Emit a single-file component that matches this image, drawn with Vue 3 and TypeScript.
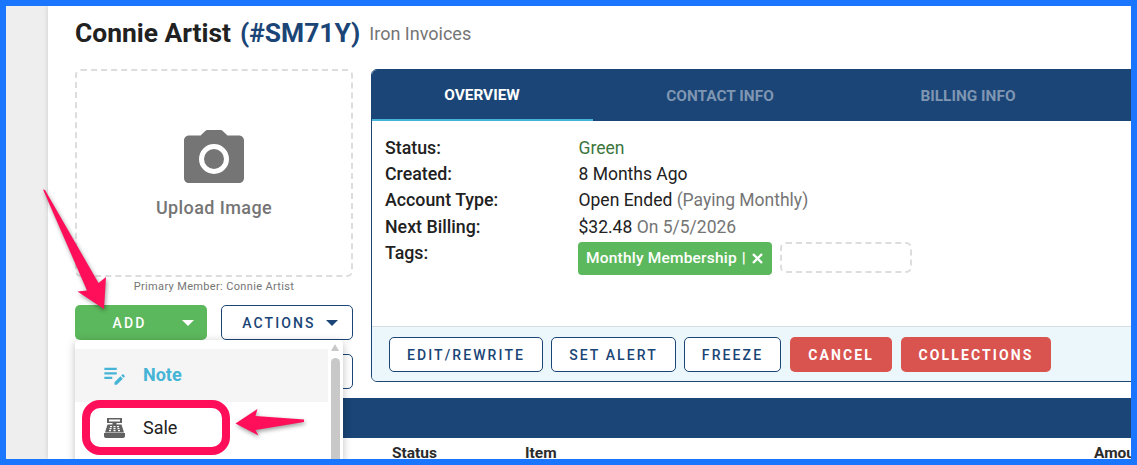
<script setup lang="ts">
const rows = [
  { label: 'Status:', value: 'Green', note: '', cls: 'green' },
  { label: 'Created:', value: '8 Months Ago', note: '', cls: '' },
  { label: 'Account Type:', value: 'Open Ended', note: '(Paying Monthly)', cls: '' },
  { label: 'Next Billing:', value: '$32.48', note: 'On 5/5/2026', cls: '' },
]
const actions = ['EDIT/REWRITE', 'SET ALERT', 'FREEZE']
</script>

<template>
  <div class="frame">
    <div class="rail"></div>
    <div class="page">
      <div class="head">
        <span class="name">Connie Artist</span>
        <span class="ref">(#SM71Y)</span>
        <span class="org">Iron Invoices</span>
      </div>
      <div class="cols">
        <div class="left">
          <div class="upload">
            <svg class="camera" width="60" height="54" viewBox="0 0 60 54">
              <path fill="#757575" d="M5 5.500h11.500L21 1.200C21.800.4 22.600 0 23.800 0h12.400c1.200 0 2 .4 2.800 1.200l4.500 4.300H55c2.800 0 5 2.200 5 5V48c0 3-2.200 5-5 5H5c-2.800 0-5-2-5-5V10.500c0-2.800 2.200-5 5-5z" />
              <circle cx="30" cy="29" r="12.500" fill="#757575" stroke="#fff" stroke-width="5" />
            </svg>
            <span class="upload-label">Upload Image</span>
          </div>
          <div class="primary">Primary Member: Connie Artist</div>
          <div class="btn-grid">
            <div class="btn solid-green add">ADD<i class="caret white"></i></div>
            <div class="btn outline act">ACTIONS<i class="caret navy"></i></div>
            <div class="btn outline blank"></div>
            <div class="btn outline blank"></div>
          </div>
          <div class="menu">
            <div class="menu-list">
              <div class="item active">
                <svg width="27" height="27" viewBox="0 0 24 24" class="item-icon">
                  <path fill="#45b4d6" d="M3 10h11v2H3v-2zm0-2h11V6H3v2zm0 8h7v-2H3v2zm15.010-3.130.71-.71c.39-.39 1.020-.39 1.410 0l.71.71c.39.39.39 1.020 0 1.410l-.71.71-2.120-2.120zm-.71.71-5.300 5.300V21h2.120l5.300-5.300-2.120-2.120z" />
                </svg>
                <span>Note</span>
              </div>
              <div class="item">
                <svg width="23" height="20" viewBox="0 0 23 20" class="item-icon reg">
                  <path fill="#616161" d="M4 0h15v5H4z" />
                  <path fill="#fff" d="M6 1.500h11v2H6z" />
                  <path fill="#616161" d="M9.500 5h4v1.500h-4zM4.500 6.500h14l2.500 8H2z" />
                  <path fill="#fff" d="M7 8h2v1.200H7zm3.500 0h2v1.200h-2zm3.500 0h2v1.200h-2zM6.500 10h2v1.200h-2zm4 0h2v1.200h-2zm4 0h2v1.200h-2zM6 12h2v1.200H6zm4.500 0h2v1.200h-2zm4.500 0h2v1.200h-2z" />
                  <path fill="#616161" d="M1 15h21v3c0 1.200-.8 2-2 2H3c-1.200 0-2-.8-2-2z" />
                </svg>
                <span>Sale</span>
              </div>
            </div>
            <div class="scroll">
              <i class="scroll-up"></i>
              <i class="thumb"></i>
            </div>
          </div>
        </div>
        <div class="panel">
          <div class="tabs">
            <div class="tab on">OVERVIEW</div>
            <div class="tab t2">CONTACT INFO</div>
            <div class="tab t3">BILLING INFO</div>
          </div>
          <div class="body">
            <div v-for="r in rows" :key="r.label" class="row">
              <span class="label">{{ r.label }}</span>
              <span class="value" :class="r.cls">{{ r.value }} <span v-if="r.note" class="note">{{ r.note }}</span></span>
            </div>
            <div class="row tags">
              <span class="label">Tags:</span>
              <span class="tag">Monthly Membership<span class="pipe">|</span><svg width="11" height="11" viewBox="0 0 11 11"><path d="M1 1l9 9m0-9l-9 9" stroke="#fff" stroke-width="2.400" /></svg></span>
              <span class="tag-add"></span>
            </div>
          </div>
          <div class="foot">
            <div v-for="a in actions" :key="a" class="btn outline foot-btn">{{ a }}</div>
            <div class="btn solid-red foot-btn cancel">CANCEL</div>
            <div class="btn solid-red foot-btn coll">COLLECTIONS</div>
          </div>
        </div>
      </div>
      <div class="bar"></div>
      <div class="thead">
        <span class="th-status">Status</span>
        <span class="th-item">Item</span>
        <span class="th-amt">Amount</span>
      </div>
    </div>
    <div class="ring"></div>
    <svg class="arrows" width="1137" height="465" viewBox="0 0 1137 465">
      <path fill="#ff0f5a" d="M43 189.500 L45 190 L98.500 283 L106 277 L104 309 L77.500 291.500 L87 290.500 Z" />
      <path fill="#ff0f5a" d="M235.500 423.500 L257.500 409 L255.500 416 L304 419.500 L304 422 L255.500 430 L258.500 435.500 Z" />
    </svg>
  </div>
</template>

<style>
html, body { margin: 0; background: #fff; }
</style>

<style scoped>
.frame {
  position: relative;
  width: 1137px;
  height: 465px;
  box-sizing: border-box;
  border: 6px solid #1a76ff;
  display: flex;
  overflow: hidden;
  font-family: Roboto, "Liberation Sans", sans-serif;
  color: #212121;
  background: #eee;
}
.rail { width: 42px; flex: none; }
.page {
  flex: 1;
  min-width: 0;
  padding-left: 27px;
  background: #fff;
  box-shadow: 0 0 5px rgba(0, 0, 0, .15);
  overflow: hidden;
}
.head {
  height: 63px;
  display: flex;
  align-items: center;
  padding-bottom: 10px;
  box-sizing: border-box;
  white-space: nowrap;
}
.name { font-size: 26.400px; font-weight: 700; margin-right: 9px; }
.ref { font-size: 26.400px; font-weight: 700; color: #1a4576; margin-right: 9px; }
.org { font-size: 18px; color: #757575; padding-top: 1px; }
.cols { display: flex; gap: 18px; align-items: flex-start; }
.left { position: relative; width: 278px; flex: none; }
.upload {
  height: 208px;
  box-sizing: border-box;
  border: 2px dashed #ddd;
  border-radius: 6px;
  display: flex;
  flex-direction: column;
  align-items: center;
  padding-top: 59px;
}
.camera { margin-bottom: 13px; }
.upload-label { font-size: 18px; font-weight: 500; color: #757575; letter-spacing: .4px; }
.primary {
  font-size: 11px;
  color: #757575;
  text-align: center;
  line-height: 20px;
  height: 28px;
  letter-spacing: .35px;
}
.btn-grid { display: grid; grid-template-columns: 132px 132px; column-gap: 14px; row-gap: 14px; }
.btn {
  height: 35px;
  box-sizing: border-box;
  border-radius: 5px;
  display: flex;
  align-items: center;
  justify-content: center;
  font-size: 14px;
  font-weight: 500;
  letter-spacing: 2.100px;
  white-space: nowrap;
}
.outline { border: 1px solid #1a4576; color: #1a4576; background: #fff; }
.solid-green { background: #5cb85c; color: #fff; }
.solid-red { background: #d9534f; color: #fff; font-weight: 700; }
.add { padding-right: 23px; position: relative; }
.add .caret { position: absolute; right: 13px; top: 15px; margin: 0; }
.act { padding-left: 6px; gap: 10px; }
.caret { width: 0; height: 0; border-left: 6px solid transparent; border-right: 6px solid transparent; }
.caret.white { border-top: 6px solid #fff; }
.caret.navy { border-top: 6px solid #1a4576; }
.menu {
  position: absolute;
  left: 0;
  top: 271px;
  width: 268px;
  height: 130px;
  background: #fff;
  border-radius: 4px;
  box-shadow: 0 2px 8px rgba(0, 0, 0, .25);
  display: flex;
  padding-top: 9px;
  box-sizing: border-box;
}
.menu-list { flex: 1; min-width: 0; }
.item {
  height: 53px;
  display: flex;
  align-items: center;
  font-size: 18px;
  padding-left: 26px;
  padding-bottom: 2px;
  box-sizing: border-box;
}
.item.active { background: #f5f5f5; color: #45b4d6; font-weight: 700; }
.item-icon { width: 27px; margin-right: 15px; flex: none; }
.reg { width: 23px; margin: 0 17px 0 2px; }
.scroll { width: 15px; flex: none; position: relative; }
.scroll-up {
  position: absolute; left: 3px; top: -5px; width: 0; height: 0;
  border-left: 4.500px solid transparent;
  border-right: 4.500px solid transparent;
  border-bottom: 7px solid #c8c8c8;
}
.thumb {
  position: absolute; left: 3px; top: 9px; width: 9px; height: 120px;
  background: #c8c8c8; border-radius: 5px;
}
.panel {
  width: 800px;
  height: 313px;
  flex: none;
  box-sizing: border-box;
  border: 1px solid #1a4576;
  border-radius: 6px;
  overflow: hidden;
  display: flex;
  flex-direction: column;
}
.tabs {
  height: 52px;
  margin-top: -1px;
  margin-left: -1px;
  background: #1a4576;
  display: flex;
  flex: none;
}
.tab {
  display: flex;
  align-items: center;
  justify-content: center;
  font-size: 15.400px;
  font-weight: 700;
  color: #7f96b2;
  padding-top: 2px;
  box-sizing: border-box;
}
.tab.on { width: 222px; color: #fff; border-bottom: 2px solid #45b4d6; }
.t2 { width: 254px; }
.t3 { width: 242px; }
.body { flex: 1; padding: 14px 13px 0; min-height: 0; }
.row { display: flex; font-size: 17.500px; line-height: 26.200px; white-space: nowrap; }
.label { width: 193.500px; flex: none; font-weight: 500; font-size: 17.800px; }
.green { color: #3c763d; }
.note { color: #757575; }
.tags { align-items: flex-start; }
.tag {
  background: #5cb85c;
  color: #fff;
  font-size: 15.500px;
  font-weight: 500;
  height: 33px;
  border-radius: 4px;
  padding: 0 8px;
  margin: 2px 8px 0 -.5px;
  box-sizing: border-box;
  display: flex;
  align-items: center;
  white-space: pre;
  letter-spacing: .2px;
}
.pipe { margin: 0 6px 0 5px; font-weight: 700; }
.tag svg { margin: 1px 1px 0 0; }
.tag-add {
  width: 132px;
  height: 31px;
  margin-top: 2px;
  box-sizing: border-box;
  border: 2px dashed #ddd;
  border-radius: 6px;
}
.foot {
  height: 55px;
  flex: none;
  box-sizing: border-box;
  background: #ebf7fa;
  border-top: 1px solid #d5dde0;
  display: flex;
  align-items: center;
  gap: 8px;
  padding: 1px 0 0 17px;
}
.foot-btn:nth-child(1) { width: 154px; }
.foot-btn:nth-child(2) { width: 125px; }
.foot-btn:nth-child(3) { width: 97px; margin-right: 1px; }
.cancel { width: 102px; }
.coll { width: 150px; margin-left: 1px; }
.bar { height: 40px; margin-top: 9px; background: #1a4576; width: 1100px; }
.thead {
  display: flex;
  font-size: 15.500px;
  font-weight: 700;
  color: #2b2b2b;
  padding-top: 6px;
  line-height: 18px;
  white-space: nowrap;
}
.th-status { margin-left: 317px; width: 133px; flex: none; }
.th-item { width: 569px; flex: none; }
.ring {
  position: absolute;
  left: 76px;
  top: 394px;
  width: 148px;
  height: 55px;
  box-sizing: border-box;
  border: 8px solid #ff0f5a;
  border-radius: 18px;
}
.arrows {
  position: absolute;
  left: -6px;
  top: -6px;
  pointer-events: none;
  filter: drop-shadow(1px 2px 2px rgba(0, 0, 0, .4));
}
</style>
